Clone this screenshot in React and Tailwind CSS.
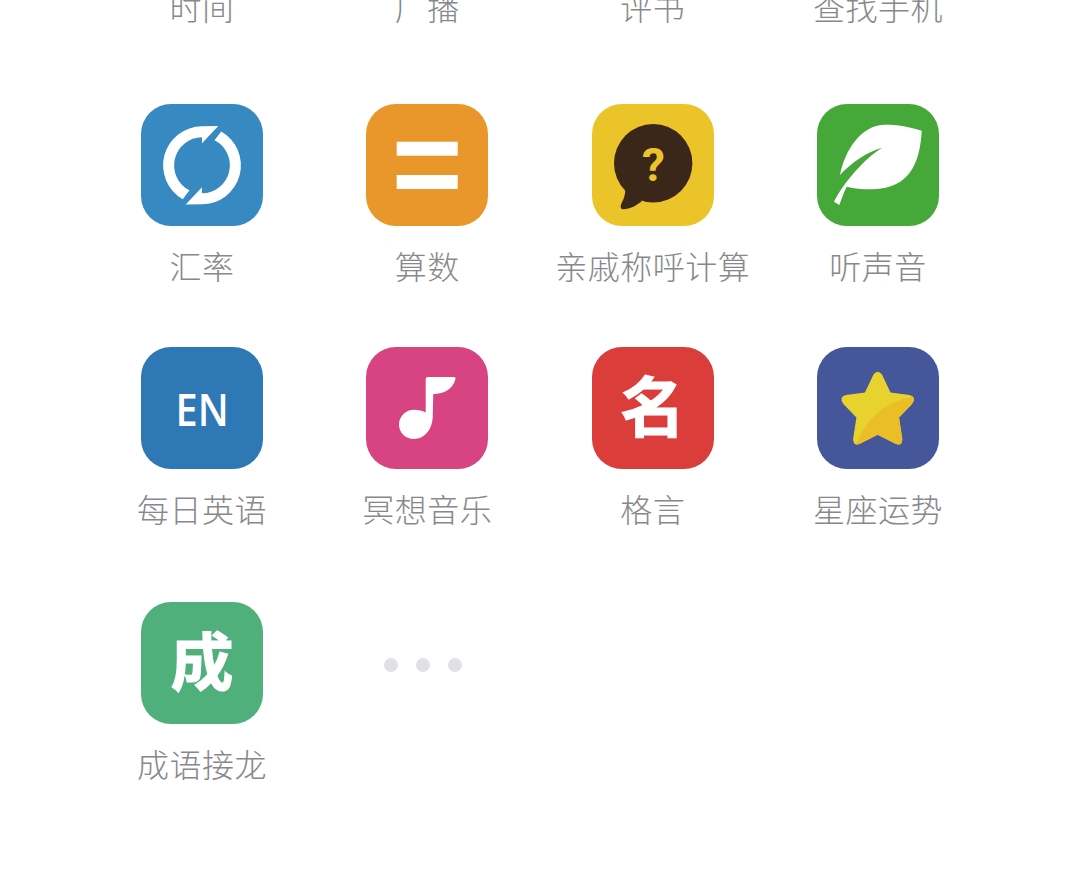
const CJK = "font-['Noto_Sans_CJK_SC',sans-serif]";

function RefreshIcon() {
  const arc = "M41.8 95.2A39 39 0 0 1 61 22.3L77.3 22 61 39.3V33.3A28 28 0 0 0 48.5 86.3Z";
  return (
    <svg viewBox="0 0 122 122" className="h-full w-full" fill="#fff">
      <path d={arc} />
      <path d={arc} transform="rotate(180 61 61.3)" />
    </svg>
  );
}

function EqualsIcon() {
  return (
    <svg viewBox="0 0 122 122" className="h-full w-full" fill="#fff">
      <rect x="30.7" y="37.7" width="61" height="14" />
      <rect x="30.7" y="71" width="61" height="14" />
    </svg>
  );
}

function BubbleIcon() {
  return (
    <svg viewBox="0 0 122 122" className="h-full w-full">
      <circle cx="61.2" cy="59.3" r="39.2" fill="#3b271a" />
      <path d="M33 84C34 91 31 96 29 100.5 28 103.5 29 105.5 31.5 105.3 38 105 44 102 50 97Z" fill="#3b271a" />
      <text x="61.5" y="77" textAnchor="middle" fontFamily="Roboto,sans-serif" fontWeight="700" fontSize="46" fill="#ebc429">?</text>
    </svg>
  );
}

function LeafIcon() {
  return (
    <svg viewBox="0 0 122 122" className="h-full w-full" fill="#fff">
      <path d="M104.7 26.7C90 22 78 20.5 68 20.7 44 21 28 46 23 71 35 58 50 48 65.3 43.7 48 54 27 78 17 97.7L22.3 101C25 94 27 88 29.7 82.7 38 85 48 85.5 56.3 85.3 92 84 103 60 104.7 26.7Z" />
    </svg>
  );
}

function NoteIcon() {
  return (
    <svg viewBox="0 0 122 122" className="h-full w-full" fill="#fff">
      <path d="M59.7 32Q59.7 30 61.7 30H87.7Q90 30 89.5 32C87 42 78 47 67.3 47L66.7 71C66 83 58 92 48 92 39 92 33 85 33 77.7 33 69 40 62.7 48 62.7 52 62.7 56.5 63.5 59.7 65.5Z" />
    </svg>
  );
}

function StarIcon() {
  const star =
    "M56.5 27.5Q60.7 22 65 27.5L73.5 45.5 92.5 48Q100 50 95 57L82 70.5 85.3 92Q85 100 78 96.5L60.7 87.7 43.4 96.5Q36.4 100 36.1 92L39.4 70.5 26.4 57Q21.4 50 28.9 48L47.9 45.5Z";
  return (
    <svg viewBox="0 0 122 122" className="h-full w-full">
      <clipPath id="star-clip">
        <path d={star} />
      </clipPath>
      <path d={star} fill="#e8d22e" />
      <path d="M100 49C76 52 50 66 38 100H100Z" fill="#eabe26" clipPath="url(#star-clip)" />
    </svg>
  );
}

function Label({ children }) {
  return (
    <span className={`mt-[17px] h-[44px] whitespace-nowrap text-[32px] leading-[44px] font-light tracking-[0.5px] text-[#88888c] ${CJK}`}>
      {children}
    </span>
  );
}

function AppItem({ label, bg, children }) {
  return (
    <div className="flex flex-col items-center">
      <div className={`flex h-[122px] w-[122px] items-center justify-center overflow-hidden rounded-[30px] ${bg}`}>
        {children}
      </div>
      <Label>{label}</Label>
    </div>
  );
}

function Glyph({ children, size }) {
  return (
    <span className={`pb-[10px] font-bold leading-none text-white [-webkit-text-stroke:1px_white] ${CJK} ${size}`}>
      {children}
    </span>
  );
}

export default function App() {
  return (
    <div className="h-[885px] w-[1080px] overflow-hidden bg-white px-[89.33px]">
      {/* top row is cut off by the scroll position */}
      <div className="-mt-[33px] grid grid-cols-4">
        {["时间", "广播", "评书", "查找手机"].map((t) => (
          <div key={t} className="flex flex-col items-center">
            <Label>{t}</Label>
          </div>
        ))}
      </div>

      <div className="mt-[76px] grid grid-cols-4">
        <AppItem label="汇率" bg="bg-[#3789c1]"><RefreshIcon /></AppItem>
        <AppItem label="算数" bg="bg-[#e9962b]"><EqualsIcon /></AppItem>
        <AppItem label="亲戚称呼计算" bg="bg-[#ebc429]"><BubbleIcon /></AppItem>
        <AppItem label="听声音" bg="bg-[#46a838]"><LeafIcon /></AppItem>
      </div>

      <div className="mt-[60px] grid grid-cols-4">
        <AppItem label="每日英语" bg="bg-[#2e78b6]">
          <span className="scale-x-[0.88] font-['Open_Sans',sans-serif] text-[45px] leading-none font-semibold text-white">EN</span>
        </AppItem>
        <AppItem label="冥想音乐" bg="bg-[#d84481]"><NoteIcon /></AppItem>
        <AppItem label="格言" bg="bg-[#db3d3a]"><Glyph size="text-[65px]">名</Glyph></AppItem>
        <AppItem label="星座运势" bg="bg-[#46569b]"><StarIcon /></AppItem>
      </div>

      <div className="mt-[71.5px] grid grid-cols-4">
        <AppItem label="成语接龙" bg="bg-[#4fb07c]"><Glyph size="text-[63px]">成</Glyph></AppItem>
        <div className="flex justify-center">
          <div className="flex h-[122px] w-[122px] items-center gap-[18px] pt-[5px] pl-[18px]">
            <span className="h-[14px] w-[14px] rounded-full bg-[#e0e1e4]" />
            <span className="h-[14px] w-[14px] rounded-full bg-[#e0e1e4]" />
            <span className="h-[14px] w-[14px] rounded-full bg-[#e0e1e4]" />
          </div>
        </div>
      </div>
    </div>
  );
}
